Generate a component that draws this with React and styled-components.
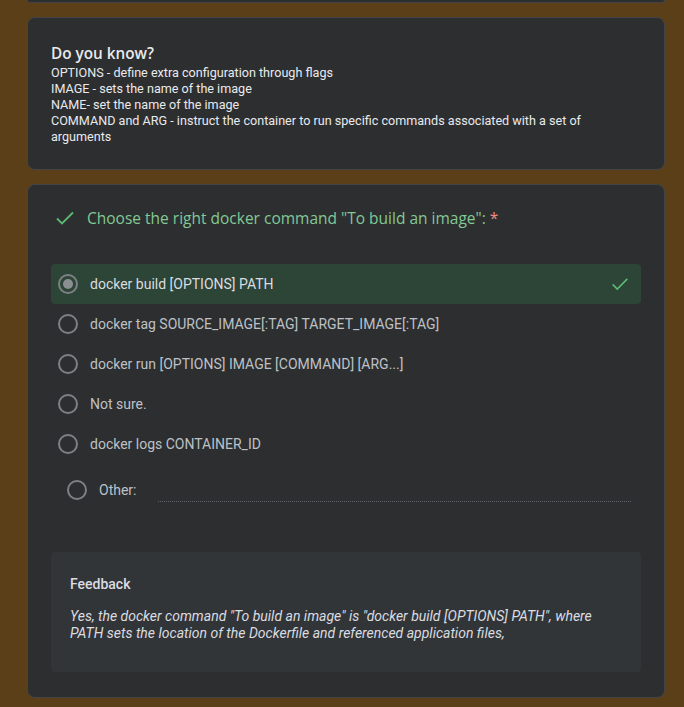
import styled, { createGlobalStyle } from "styled-components";

const GlobalStyle = createGlobalStyle`
  body {
    margin: 0;
    background: #5b3f19;
    font-family: Roboto, "Liberation Sans", sans-serif;
  }
`;

const Page = styled.div`
  width: 638px;
  margin-left: 27px;
  display: flex;
  flex-direction: column;
  gap: 14px;
  padding-bottom: 10px;
`;

const Card = styled.div`
  background: #2d2e30;
  border: 1px solid #434446;
  border-radius: 8px;
  box-sizing: border-box;
  padding: ${(p) => p.$pad || "0"};
`;

const TopStub = styled(Card)`
  height: 3px;
  border-top: none;
  border-radius: 0 0 8px 8px;
`;

const InfoTitle = styled.h2`
  margin: 0 0 2px;
  font-family: "Open Sans", Roboto, sans-serif;
  font-weight: 600;
  font-size: 15.3px;
  line-height: 20px;
  color: #e8eaed;
`;

const InfoText = styled.div`
  font-size: 12.6px;
  line-height: 16px;
  color: #e8eaed;
`;

const Question = styled.div`
  display: flex;
  align-items: center;
  gap: 10px;
  margin-left: 2px;
  margin-bottom: 34px;
  font-family: "Open Sans", Roboto, sans-serif;
  font-size: 15.5px;
  line-height: 24px;
  color: #81c995;
`;

const Required = styled.span`
  color: #f28b82;
  margin-left: 4px;
`;

const Options = styled.div`
  display: flex;
  flex-direction: column;
`;

const Option = styled.div`
  height: 40px;
  display: flex;
  align-items: center;
  gap: 12px;
  margin-top: ${(p) => (p.$other ? "6px" : "0")};
  padding: 0 10px 0 ${(p) => (p.$other ? "16px" : "7px")};
  border-radius: 4px;
  background: ${(p) => (p.$correct ? "#2c4536" : "transparent")};
  font-size: 14px;
  color: ${(p) => (p.$correct ? "#dadce0" : "#bdc1c6")};
`;

const Radio = styled.span`
  width: 20px;
  height: 20px;
  box-sizing: border-box;
  border-radius: 50%;
  border: 2px solid #7d8185;
  flex-shrink: 0;
  display: flex;
  align-items: center;
  justify-content: center;
  &::after {
    content: "";
    width: 10px;
    height: 10px;
    border-radius: 50%;
    background: ${(p) => (p.$checked ? "#8c8f92" : "transparent")};
  }
`;

const Label = styled.span`
  flex: ${(p) => (p.$grow ? 1 : "none")};
`;

const OtherInput = styled.div`
  flex: 1;
  align-self: flex-end;
  margin: 0 0 8px 10px;
  height: 1px;
  border-bottom: 1px dotted #5f6368;
`;

const Feedback = styled.div`
  margin-top: 42px;
  margin-bottom: 25px;
  background: #323538;
  border-radius: 4px;
  padding: 22px 19px 30px;
  color: #dadce0;
`;

const FeedbackTitle = styled.div`
  font-weight: 500;
  font-size: 14px;
  line-height: 20px;
  margin-bottom: 14px;
`;

const FeedbackText = styled.div`
  font-style: italic;
  font-size: 14px;
  line-height: 17px;
`;

const Check = ({ size = 24, color = "#5bb974" }) => (
  <svg width={size} height={size} viewBox="0 0 24 24" fill="none">
    <path d="M4 12.5l5 5L20 6.5" stroke={color} strokeWidth="1.8" />
  </svg>
);

const choices = [
  "docker build [OPTIONS] PATH",
  "docker tag SOURCE_IMAGE[:TAG] TARGET_IMAGE[:TAG]",
  "docker run [OPTIONS] IMAGE [COMMAND] [ARG...]",
  "Not sure.",
  "docker logs CONTAINER_ID",
];

export default function App() {
  return (
    <>
      <GlobalStyle />
      <Page>
        <TopStub />
        <Card $pad="25px 23px 24px">
          <InfoTitle>Do you know?</InfoTitle>
          <InfoText>
            OPTIONS - define extra configuration through flags
            <br />
            IMAGE - sets the name of the image
            <br />
            NAME- set the name of the image
            <br />
            COMMAND and ARG - instruct the container to run specific commands associated with a set of arguments
          </InfoText>
        </Card>
        <Card $pad="21px 23px 0">
          <Question>
            <Check />
            <span>
              Choose the right docker command "To build an image":
              <Required>*</Required>
            </span>
          </Question>
          <Options>
            {choices.map((c, i) => (
              <Option key={c} $correct={i === 0}>
                <Radio $checked={i === 0} />
                <Label $grow>{c}</Label>
                {i === 0 && <Check size={22} />}
              </Option>
            ))}
            <Option $other>
              <Radio />
              <Label>Other:</Label>
              <OtherInput />
            </Option>
          </Options>
          <Feedback>
            <FeedbackTitle>Feedback</FeedbackTitle>
            <FeedbackText>
              Yes, the docker command "To build an image" is "docker build [OPTIONS] PATH", where PATH sets the
              location of the Dockerfile and referenced application files,
            </FeedbackText>
          </Feedback>
        </Card>
      </Page>
    </>
  );
}
